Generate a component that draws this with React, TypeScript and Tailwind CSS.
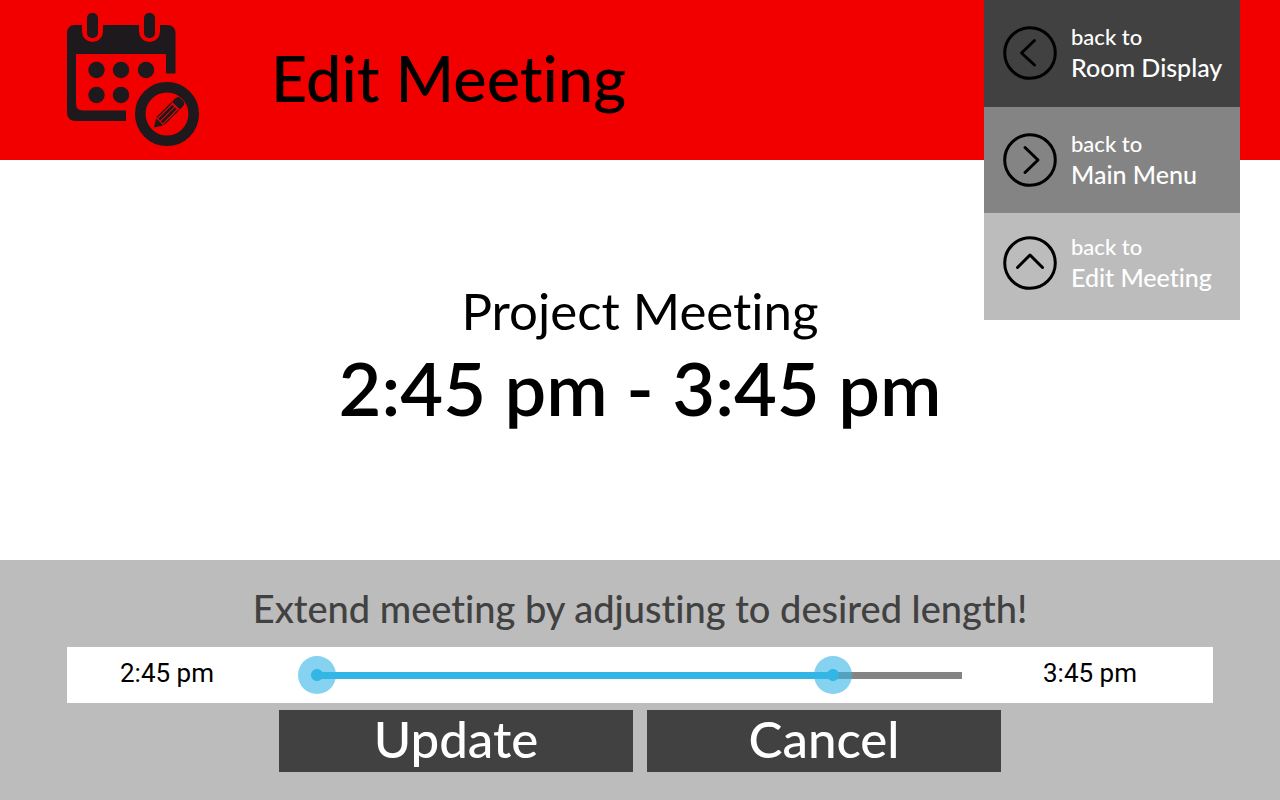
import { useState } from "react";

const navItems = [
  { target: "Room Display", arrow: "M31.5 14.5 18.5 27 31.5 39", bg: "bg-[#414141]" },
  { target: "Main Menu", arrow: "M22 14.5 35 27 22 39.5", bg: "bg-[#848484]" },
  { target: "Edit Meeting", arrow: "M14.5 31.5 27 19 39.5 31.5", bg: "bg-[#bcbcbc] pb-2" },
];

function CalendarIcon() {
  return (
    <svg viewBox="0 -1 134 136" className="h-[136px] w-[134px] shrink-0" fill="#1d191c" aria-hidden="true">
      <path d="M8 12H15V18.500A10.500 10.500 0 0 0 36 18.500V12H72V18.500A10.500 10.500 0 0 0 93 18.500V12H100Q108.500 12 108.500 20.500V60.500H99V41H9V91Q9 97.500 16 97.500H59V108H9Q0 108 0 99.500V20.500Q0 12 8 12Z" />
      <rect x="20" y="0" width="11" height="25" rx="5" />
      <rect x="77" y="0" width="11" height="25" rx="5" />
      <circle cx="29.5" cy="57" r="8.2" />
      <circle cx="54" cy="57" r="8.2" />
      <circle cx="79" cy="57" r="8.2" />
      <circle cx="29.5" cy="82" r="8.2" />
      <circle cx="54" cy="82" r="8.2" />
      <circle cx="100" cy="101" r="26.7" fill="none" stroke="#1d191c" strokeWidth="10.6" />
      <g transform="translate(87 114.5) rotate(-45)">
        <path d="M0 0 8-5V5Z" />
        <path d="M9-5H30M9 5H30" stroke="#1d191c" strokeWidth="1.200" />
        <rect x="9" y="-3.200" width="20" height="2.700" />
        <rect x="9" y="0.500" width="20" height="2.700" />
        <path d="M31-5.500H35Q39.500-5.500 39.500-2V2Q39.500 5.500 35 5.500H31Z" />
      </g>
    </svg>
  );
}

const rangeClass =
  "pointer-events-none absolute inset-0 m-0 h-full w-full appearance-none bg-transparent [&::-webkit-slider-thumb]:pointer-events-auto [&::-webkit-slider-thumb]:size-[38px] [&::-webkit-slider-thumb]:cursor-pointer [&::-webkit-slider-thumb]:appearance-none [&::-webkit-slider-thumb]:rounded-full [&::-webkit-slider-thumb]:bg-[radial-gradient(circle,#33b5e5_5.5px,#33b5e599_6.5px)]";

export default function App() {
  const [start, setStart] = useState(0);
  const [end, setEnd] = useState(80);

  return (
    <div className="relative flex min-h-screen flex-col bg-white font-['Lato',sans-serif] text-black [font-variant-ligatures:none]">
      <header className="flex h-40 items-center bg-[#f20000] pl-[67px]">
        <CalendarIcon />
        <h1 className="pb-1 pl-[70px] text-[63px] leading-[80px] font-medium">Edit Meeting</h1>
      </header>

      <nav className="absolute top-0 right-10 grid h-80 w-64 grid-rows-3">
        {navItems.map((item) => (
          <a key={item.target} href="#" className={`flex items-center gap-[14px] pl-[19px] text-white ${item.bg}`}>
            <svg viewBox="0 0 54 54" className="size-[54px] shrink-0" fill="none" stroke="#000" strokeWidth="3" strokeLinecap="round" strokeLinejoin="round" aria-hidden="true">
              <circle cx="27" cy="27" r="25.300" />
              <path d={item.arrow} />
            </svg>
            <span className="flex flex-col pb-[2px] font-medium whitespace-nowrap">
              <span className="text-[22px] leading-[30px]">back to</span>
              <span className="text-[25px] leading-[30px]">{item.target}</span>
            </span>
          </a>
        ))}
      </nav>

      <main className="flex flex-1 flex-col items-center justify-center pb-2 text-center">
        <h2 className="text-[51px] leading-[64px] font-normal">Project Meeting</h2>
        <p className="text-[74px] leading-[90px] font-semibold">2:45 pm - 3:45 pm</p>
      </main>

      <footer className="flex min-h-60 flex-col bg-[#bcbcbc] px-[67px] pt-6 pb-7 text-center">
        <p className="text-[38px] leading-[48px] font-medium text-[#414141]">Extend meeting by adjusting to desired length!</p>
        <div className="mt-[15px] flex h-14 items-center bg-white font-['Roboto',sans-serif] text-[26px]">
          <span className="w-[200px] shrink-0 pb-1">2:45 pm</span>
          <div className="relative ml-[31px] h-[38px] flex-1">
            <div className="flex h-full items-center px-[19px]">
              <div className="h-[7px] w-full bg-[#848484]">
                <div className="h-full bg-[#33b5e5]" style={{ marginLeft: `${start}%`, width: `${end - start}%` }} />
              </div>
            </div>
            <input type="range" aria-label="Start time" value={start} onChange={(e) => setStart(Math.min(Number(e.target.value), end))} className={rangeClass} />
            <input type="range" aria-label="End time" value={end} onChange={(e) => setEnd(Math.max(Number(e.target.value), start))} className={rangeClass} />
          </div>
          <span className="w-[232px] shrink-0 pr-[14px] pb-1">3:45 pm</span>
        </div>
        <div className="mt-[7px] flex justify-center gap-[14px] text-[51px] font-medium text-white">
          <button type="button" className="h-[62px] w-[354px] bg-[#414141] pb-1 leading-[58px]">Update</button>
          <button type="button" className="h-[62px] w-[354px] bg-[#414141] pb-1 leading-[58px]">Cancel</button>
        </div>
      </footer>
    </div>
  );
}
